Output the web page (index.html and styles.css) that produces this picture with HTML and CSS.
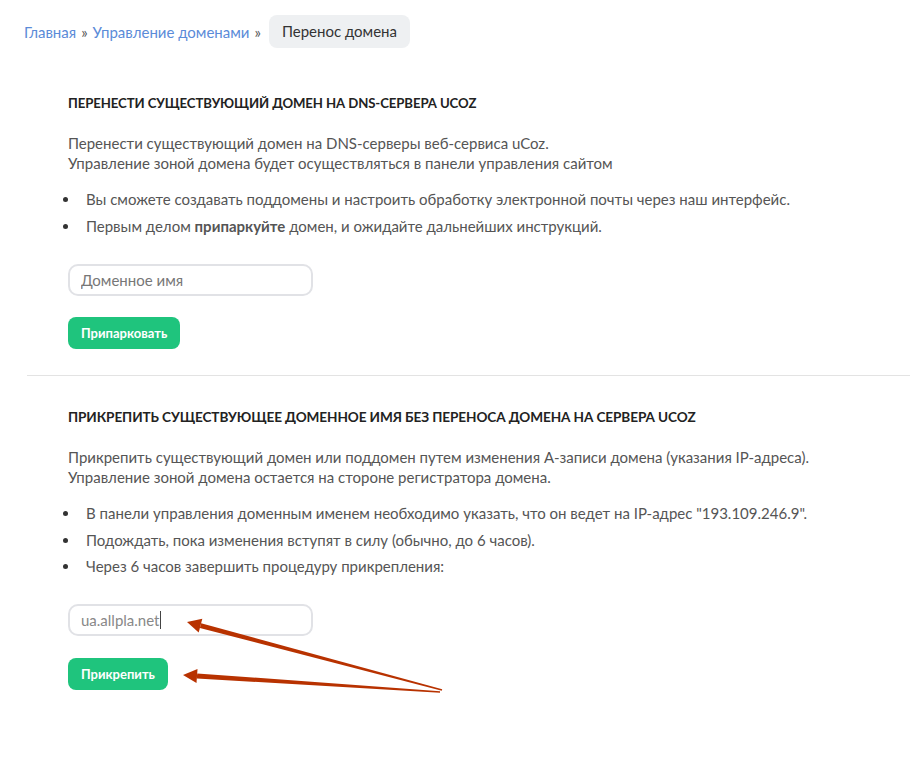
FILE: index.html
```html
<!DOCTYPE html>
<html lang="ru">
<head>
<meta charset="utf-8">
<title>Перенос домена</title>
<link rel="stylesheet" href="styles.css">
</head>
<body>
<div class="page">
  <nav class="crumbs">
    <a class="crumb-link" href="#">Главная</a><span class="sep">»</span><a class="crumb-link" href="#">Управление доменами</a><span class="sep">»</span><span class="crumb-current">Перенос домена</span>
  </nav>

  <section class="block block-first">
    <h2 class="title">Перенести существующий домен на DNS-сервера uCoz</h2>
    <p class="desc">Перенести существующий домен на DNS-серверы веб-сервиса uCoz.<br>Управление зоной домена будет осуществляться в панели управления сайтом</p>
    <ul class="list">
      <li><span>Вы сможете создавать поддомены и настроить обработку электронной почты через наш интерфейс.</span></li>
      <li><span>Первым делом <b>припаркуйте</b> домен, и ожидайте дальнейших инструкций.</span></li>
    </ul>
    <div class="form">
      <input class="field" type="text" placeholder="Доменное имя">
      <button class="btn" type="button">Припарковать</button>
    </div>
  </section>

  <hr class="divider">

  <section class="block">
    <h2 class="title title-wide">Прикрепить существующее доменное имя без переноса домена на сервера uCoz</h2>
    <p class="desc">Прикрепить существующий домен или поддомен путем изменения А-записи домена (указания IP-адреса).<br>Управление зоной домена остается на стороне регистратора домена.</p>
    <ul class="list">
      <li><span>В панели управления доменным именем необходимо указать, что он ведет на IP-адрес "193.109.246.9".</span></li>
      <li><span>Подождать, пока изменения вступят в силу (обычно, до 6 часов).</span></li>
      <li><span>Через 6 часов завершить процедуру прикрепления:</span></li>
    </ul>
    <div class="form form-second">
      <div class="field field-value">ua.allpla.net<span class="caret"></span></div>
      <button class="btn" type="button">Прикрепить</button>
    </div>
  </section>

  <svg class="arrows" width="910" height="783" viewBox="0 0 910 783" aria-hidden="true">
    <g fill="#b83200">
      <polygon points="187,622 202.3,618.8 198.7,632.4"/>
      <polygon points="199.9,628.0 201.1,623.2 442.2,689.3 441.8,690.7"/>
      <polygon points="183,675 197.5,668.9 196.5,682.9"/>
      <polygon points="196.8,678.4 197.2,673.4 440,691.3 440,692.7"/>
    </g>
  </svg>
</div>
</body>
</html>
```

FILE: styles.css
```css
* { box-sizing: border-box; }

body {
  margin: 0;
  background: #fff;
  font-family: "Lato", "Open Sans", "Liberation Sans", sans-serif;
  color: #555;
}

.page {
  position: relative;
  width: 910px;
  height: 783px;
  overflow: hidden;
}

.crumbs {
  display: flex;
  align-items: center;
  padding: 15px 0 0 24px;
  font-size: 15px;
}

.crumb-link {
  color: #5b8bd8;
  text-decoration: none;
}

.sep {
  color: #555;
  margin: 0 5px;
}

.crumb-current {
  background: #eef0f2;
  color: #333;
  border-radius: 8px;
  padding: 0 13px;
  height: 33px;
  line-height: 33px;
  margin-left: 3px;
}

.block {
  padding: 0 0 0 68px;
}

.block-first {
  padding-top: 47px;
}

.title {
  margin: 0;
  font-size: 13.2px;
  font-weight: 700;
  color: #222;
  text-transform: uppercase;
  letter-spacing: -0.1px;
  line-height: 16px;
}

.title-wide {
  font-size: 13.6px;
}

.desc {
  margin: 22px 0 0;
  font-size: 15px;
  line-height: 20px;
}

.list {
  list-style: none;
  margin: 16px 0 0 -5px;
  padding: 0;
  font-size: 15px;
  line-height: 20px;
}

.list li {
  display: flex;
  align-items: center;
  margin-bottom: 7px;
}

.list li:nth-child(3) {
  margin-top: -1px;
}

.list li::before {
  content: "";
  flex: none;
  width: 5px;
  height: 5px;
  border-radius: 50%;
  background: #333;
  margin: 1px 18px 0 0;
}

.form {
  display: flex;
  flex-direction: column;
  align-items: flex-start;
  gap: 21px;
  margin-top: 28px;
}

.form-second {
  gap: 22px;
}

.field {
  width: 245px;
  height: 32px;
  border: 2px solid #e1e2e6;
  border-radius: 10px;
  padding: 0 11px;
  font-family: inherit;
  font-size: 15px;
  color: #888;
  background: #fff;
  outline: none;
}

.field::placeholder {
  color: #777;
}

.field-value {
  display: flex;
  align-items: center;
  color: #888;
}

.caret {
  display: inline-block;
  width: 1px;
  height: 18px;
  background: #444;
  margin-left: 1px;
}

.btn {
  height: 32px;
  padding: 0 13px;
  border: none;
  border-radius: 8px;
  background: #1fc47d;
  color: #fff;
  font-family: inherit;
  font-size: 13px;
  font-weight: 700;
  cursor: pointer;
}

.divider {
  margin: 26px 0 33px 27px;
  border: none;
  border-top: 1px solid #e3e3e3;
}

.arrows {
  position: absolute;
  left: 0;
  top: 0;
  pointer-events: none;
}
```
